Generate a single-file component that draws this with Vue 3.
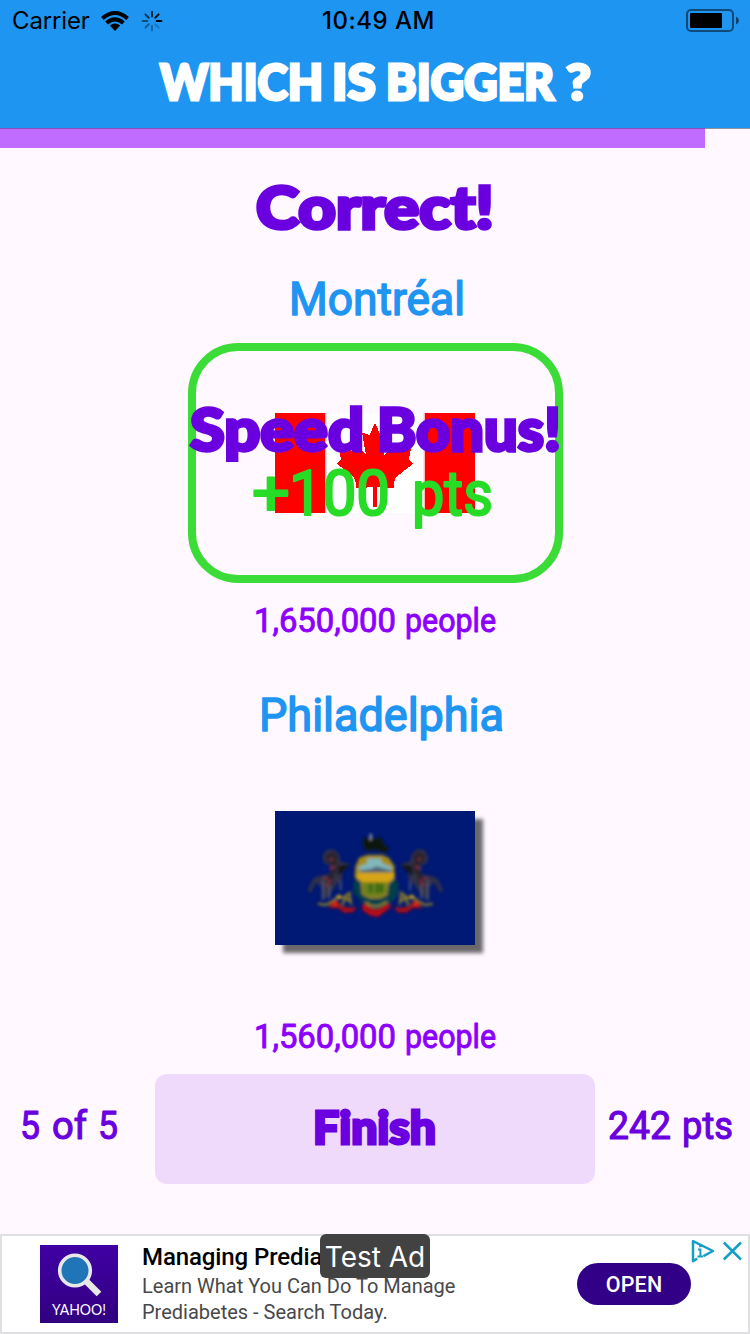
<script setup>
import { h } from 'vue'

// One line of display lettering; each word is [text, x, width] on the 750px canvas.
const Lettering = (props) =>
  h(
    'svg',
    { class: 'lettering', width: 750, height: props.height, viewBox: `0 0 750 ${props.height}` },
    [
      h(
        'text',
        { y: props.base },
        props.words.flatMap(([text, x, width], i) => [
          i ? ' ' : '',
          h('tspan', { x, textLength: width, lengthAdjust: 'spacingAndGlyphs' }, text)
        ])
      )
    ]
  )
Lettering.props = ['height', 'base', 'words']

const title = [['WHICH', 160, 163], ['IS', 332, 44], ['BIGGER', 386, 168], ['?', 566, 25]]
const verdict = [['Correct!', 256, 238]]
const cityA = [['Montréal', 289, 176]]
const cityB = [['Philadelphia', 259, 245]]
const bonus = [['Speed', 190, 174], ['Bonus!', 377, 184]]
const bonusPts = [['+', 252, 38], ['100', 289, 101], ['pts', 412, 81]]
const peopleA = [['1,650,000', 254, 142], ['people', 405, 91]]
const peopleB = [['1,560,000', 254, 142], ['people', 405, 91]]
const spokes = [0.9, 1, 0.2, 0.3, 0.4, 0.5, 0.65, 0.8]
const progress = 94
</script>

<template>
  <main class="screen">
    <header class="nav">
      <div class="status">
        <span class="carrier">Carrier</span>
        <svg class="wifi" width="28" height="20" viewBox="0 0 28 20">
          <g fill="none" stroke="#000" stroke-width="4">
            <path d="M1.4 7.4Q14 -3.4 26.6 7.4" />
            <path d="M5.6 12Q14 4.8 22.4 12" />
          </g>
          <path d="M8.8 14.6Q14 10.6 19.2 14.6L14 20Z" />
        </svg>
        <svg class="spinner" width="20" height="20" viewBox="-10 -10 20 20">
          <path
            v-for="(o, i) in spokes"
            :key="i"
            d="M0 -4.6V-9.4"
            stroke="#000"
            stroke-width="1.9"
            stroke-linecap="round"
            :opacity="o"
            :transform="`rotate(${i * 45 + 45})`"
          />
        </svg>
        <span class="clock">10:49 AM</span>
        <svg class="battery" width="54" height="24" viewBox="0 0 54 24">
          <rect x="1" y="1" width="46" height="21" rx="4" fill="none" stroke="#000" stroke-opacity=".5" stroke-width="2" />
          <rect x="4" y="4" width="32" height="15" rx="1" />
          <path d="M50 7.5Q53 9 53 11.5T50 15.5Z" opacity=".55" />
        </svg>
      </div>
      <Lettering class="heavy title" :height="86" :base="58" :words="title" />
    </header>

    <div class="track"><div class="bar" :style="{ width: progress + '%' }"></div></div>

    <Lettering class="heavy verdict" :height="112" :base="81" :words="verdict" />
    <Lettering class="round city" :height="83" :base="55" :words="cityA" />

    <section class="choice">
      <svg class="canada" width="200" height="100" viewBox="0 0 200 100">
        <rect width="200" height="100" fill="#fff" />
        <path d="M0 0H50V100H0ZM150 0H200V100H150Z" fill="#fe0000" />
        <path d="M50.7 0V100M149.3 0V100" stroke="#ffb8b8" stroke-width="1.4" />
        <path
          d="M100 10 94.5 22 87 19.5 91 42 82 33 80 38 64 36 66 46 62 51 79 64 81 70 81 75.5 98.2 74V94H101.8V74L119 75.5 119 70 121 64 138 51 134 46 136 36 120 38 118 33 109 42 113 19.5 105.5 22Z"
          fill="#fe0000"
          shape-rendering="crispEdges"
        />
      </svg>
      <div class="overlay">
        <Lettering class="heavy bonus" :height="72" :base="58" :words="bonus" />
        <Lettering class="round points" :height="72" :base="50" :words="bonusPts" />
      </div>
    </section>

    <Lettering class="round people" :height="88" :base="49" :words="peopleA" />
    <Lettering class="round city" :height="140" :base="60" :words="cityB" />

    <section class="second">
      <svg class="penn" width="200" height="134" viewBox="0 0 200 134">
        <defs>
          <filter id="soft" x="-10%" y="-10%" width="120%" height="120%"><feGaussianBlur stdDeviation="4" /></filter>
          <g id="horse">
            <path d="M68 94 78 76 98 72 116 86 122 110 150 116 142 126 126 142 126 165 112 175 92 205 80 220 66 222 64 186 48 172 32 204 22 196 40 160 62 152 88 148 96 126 70 112Z" fill="#303048" />
            <path d="M78 90 98 80 112 92 108 116 118 122 100 150 98 172 80 192 76 168 92 140 96 118 80 110Z" fill="#2c2229" />
            <path d="M118 122 148 118 128 142 112 152Z" fill="#151518" />
            <path d="M90 100 98 106M88 132 106 124M70 156 82 164M78 184 92 164" stroke="#873348" stroke-width="6" />
            <path d="M69 166V226M88 180V220M122 168V196" stroke="#596078" stroke-width="5" />
            <path d="M54 236 76 240 96 230 118 212 126 220 148 204 152 232 138 218 126 240" fill="none" stroke="#8b7b28" stroke-width="7" />
            <path d="M86 250 94 232 112 226 124 244 154 248 170 246 160 262 134 264 110 248Z" fill="#a60918" />
            <circle cx="105" cy="237" r="8" fill="#d52b16" />
            <circle cx="116" cy="216" r="6" fill="#d1ad25" />
          </g>
        </defs>
        <rect width="200" height="134" fill="#001974" />
        <g transform="translate(25 14) scale(.3333)" filter="url(#soft)">
          <use href="#horse" />
          <use href="#horse" transform="translate(452 0) scale(-1 1)" />
          <path d="M160 172 176 160H278L296 174 294 206 272 234 232 244 190 234 162 204Z" fill="#063f4b" />
          <path d="M190 36 206 44 212 26 222 44 242 36 252 58 268 70 256 84 230 74 198 78 190 62Z" fill="#11150f" />
          <path d="M212 26V46" stroke="#aaafb0" stroke-width="6" />
          <path d="M178 98 202 90H246L266 98 284 124 280 164 266 176 262 210 240 220H208L186 208 182 170 164 158 166 124Z" fill="#a68b17" />
          <path d="M174 142H284V160L264 170H186L170 160Z" fill="#d7a514" />
          <path d="M202 100H242L248 116 274 124V136H176V124L200 116Z" fill="#81b7bd" />
          <path d="M180 136 212 132 230 124 272 136V142H180Z" fill="#536575" />
          <path d="M188 174H260V204L240 214H206L190 204Z" fill="#68801b" />
          <path d="M212 176V202M232 174V202M244 176V202" stroke="#255e18" stroke-width="7" />
          <path d="M184 240 200 236 214 250 236 252 262 236 276 244 250 264 234 276 210 272 188 256Z" fill="#b40817" />
          <path d="M196 232 216 244 236 244 262 230" fill="none" stroke="#8d8c29" stroke-width="7" />
        </g>
      </svg>
    </section>

    <Lettering class="round people lower" :height="49" :base="23" :words="peopleB" />

    <footer class="actions">
      <svg class="round count" width="155" height="110" viewBox="0 0 155 110">
        <text y="65">
          <tspan x="20" textLength="20" lengthAdjust="spacingAndGlyphs">5</tspan>
          <tspan x="52" textLength="35" lengthAdjust="spacingAndGlyphs">of</tspan>
          <tspan x="98" textLength="20" lengthAdjust="spacingAndGlyphs">5</tspan>
        </text>
      </svg>
      <button class="finish">
        <svg class="heavy" width="440" height="110" viewBox="0 0 440 110">
          <text x="158" y="70" textLength="123" lengthAdjust="spacingAndGlyphs">Finish</text>
        </svg>
      </button>
      <svg class="round count" width="155" height="110" viewBox="0 0 155 110">
        <text y="65">
          <tspan x="13" textLength="63" lengthAdjust="spacingAndGlyphs">242</tspan>
          <tspan x="87" textLength="51" lengthAdjust="spacingAndGlyphs">pts</tspan>
        </text>
      </svg>
    </footer>

    <aside class="ad">
      <svg class="yahoo" width="78" height="78" viewBox="0 0 78 78">
        <defs>
          <linearGradient id="violet" x2="0" y2="1">
            <stop stop-color="#4000a4" />
            <stop offset="1" stop-color="#310080" />
          </linearGradient>
        </defs>
        <rect width="78" height="78" fill="url(#violet)" />
        <path d="M45 35 59 49" stroke="#e8e8e8" stroke-width="6.5" />
        <circle cx="35" cy="25.5" r="15.3" fill="#2074b8" stroke="#e8e8e8" stroke-width="3.6" />
        <text x="12" y="69.5" textLength="54" lengthAdjust="spacingAndGlyphs">YAHOO!</text>
      </svg>
      <div class="copy">
        <strong>Managing Predia</strong>
        <span>Learn What You Can Do To Manage</span>
        <span>Prediabetes - Search Today.</span>
      </div>
      <button class="open">OPEN</button>
      <svg class="choices" width="54" height="26" viewBox="0 0 54 26" fill="none" stroke="#149fc4" stroke-width="2.5">
        <path d="M6.2 20.6 2 23.2V3.2L22 13 12.4 18.2" stroke-linejoin="round" />
        <path d="M7 11.4H9.4V18.2M6.4 18.4H12.2" stroke-width="2" />
        <path d="M9.4 6.8V9.2" stroke-width="2.6" />
        <path d="M32.8 4.5 50 21.5M50 4.5 32.8 21.5" stroke-width="2.5" />
      </svg>
      <span class="badge">Test Ad</span>
    </aside>
  </main>
</template>

<style>
body { margin: 0; background: #fff8ff; }
</style>

<style scoped>
.screen {
  width: 750px;
  height: 1334px;
  overflow: hidden;
  display: flex;
  flex-direction: column;
  background: #fff8ff;
  font-family: Roboto, "Liberation Sans", sans-serif;
}
svg { display: block; flex: none; overflow: visible; }
.heavy {
  font-family: Lato, "Open Sans", sans-serif;
  font-weight: 900;
  fill: #6a00e0;
  stroke: #6a00e0;
  stroke-width: 2.4px;
}
.round {
  font-family: Roboto, "Liberation Sans", sans-serif;
  font-weight: 400;
  stroke-linejoin: round;
  stroke-linecap: round;
}
.nav { height: 128px; background: #1f95f2; box-sizing: border-box; }
.status {
  height: 42px;
  display: grid;
  grid-template-columns: 89px 28px 20px 1fr 54px;
  align-items: center;
  font: 400 24px Inter, sans-serif;
  color: #000;
  padding-right: 10px;
}
.carrier { padding-left: 12px; letter-spacing: -.15px; margin-top: -1px; }
.wifi { margin-left: 12px; }
.spinner { margin-left: 25px; }
.clock { margin: -1px 0 0 185px; font-weight: 550; letter-spacing: .5px; white-space: nowrap; }
.title { font-size: 48.5px; fill: #fff; stroke: #fff; stroke-width: 3px; }
.track { height: 20px; box-sizing: border-box; border-top: 1px solid #93929f; }
.bar { height: 20px; margin-top: -1px; background: #c06cff; border-top: 1px solid #8650b3; box-sizing: border-box; }
.verdict { font-size: 59px; stroke-width: 3.6px; }
.city { font-size: 46px; fill: #1f95f2; stroke: #1f95f2; stroke-width: 1.5px; }
.choice {
  position: relative;
  width: 375px;
  height: 240px;
  margin: 0 auto;
  box-sizing: border-box;
  border: 8px solid #3bdc37;
  border-radius: 50px;
  display: grid;
  place-items: center;
}
.overlay { position: absolute; left: -196px; top: 42px; }
.bonus { font-size: 59px; stroke-width: 3.4px; }
.points { font-size: 63px; fill: #27dc27; stroke: #27dc27; stroke-width: 2.2px; }
.people { font-size: 33px; fill: #8c00ff; stroke: #8c00ff; stroke-width: .9px; }
.second { height: 214px; display: flex; justify-content: center; }
.penn { box-shadow: 8px 8px 4px rgba(0, 0, 0, .58); }
.actions { display: flex; height: 110px; flex: none; margin-bottom: 50px; }
.count { font-size: 38.5px; fill: #6a00e0; stroke: #6a00e0; stroke-width: 1.1px; }
.finish {
  width: 440px;
  padding: 0;
  border: 0;
  border-radius: 12px;
  background: #f0dafc;
}
.finish svg { font-size: 46px; stroke-width: 3px; }
.ad {
  position: relative;
  height: 100px;
  flex: none;
  box-sizing: border-box;
  border: 2px solid #e0e0e2;
  background: #fff;
  display: flex;
  align-items: flex-start;
  padding-left: 38px;
}
.yahoo { margin-top: 9px; font: 400 16px Lato, sans-serif; fill: #fff; }
.copy { width: 320px; margin: 6px 0 0 24px; display: flex; flex-direction: column; color: #48484a; font-size: 20px; line-height: 26px; white-space: nowrap; }
.copy strong { color: #000; font-weight: 500; font-size: 24px; line-height: 31px; letter-spacing: -.1px; }
.open {
  width: 114px;
  height: 42px;
  margin: 27px 0 0 115px;
  padding: 0;
  border: 0;
  border-radius: 21px;
  background: #320087;
  color: #fff;
  font: 500 21.5px Roboto, sans-serif;
  letter-spacing: .2px;
}
.choices { margin-top: 2px; }
.badge {
  position: absolute;
  left: 318px;
  top: -2px;
  width: 110px;
  height: 44px;
  border-radius: 6px;
  background: #424242;
  color: #fff;
  font: 400 28px/46px Inter, sans-serif;
  text-align: center;
  white-space: nowrap;
}
</style>
